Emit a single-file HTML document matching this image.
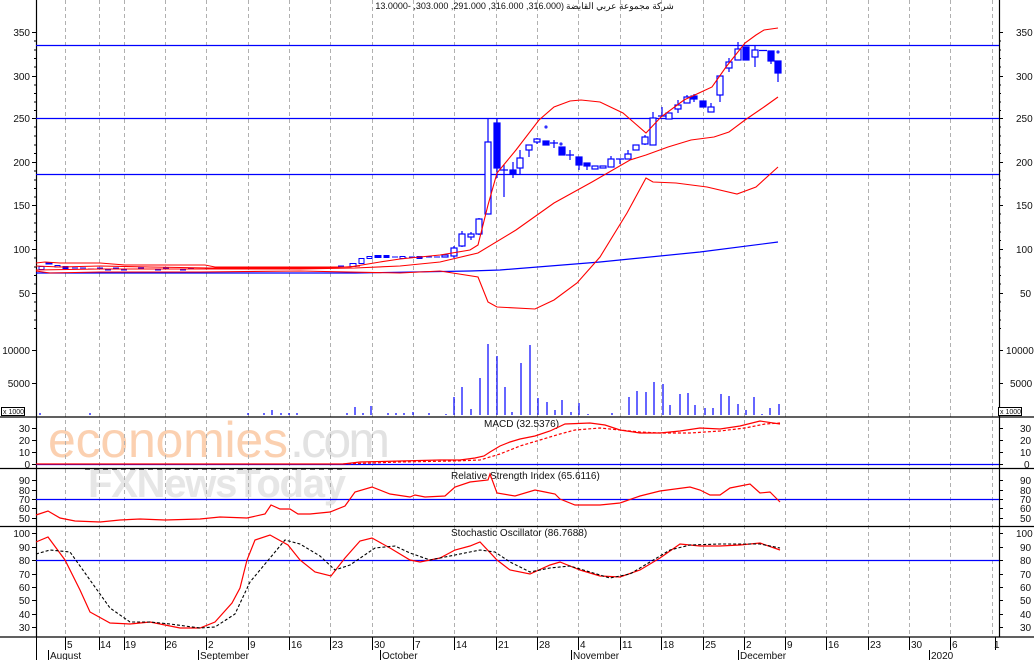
<!DOCTYPE html>
<html><head><meta charset="utf-8"><style>
html,body{margin:0;padding:0;background:#fff;}
svg{display:block;}
text{font-family:"Liberation Sans","Noto Sans CJK SC",sans-serif;font-size:10px;fill:#111;}
.l{text-anchor:end;}
</style></head><body>
<svg width="1034" height="660" viewBox="0 0 1034 660" xmlns="http://www.w3.org/2000/svg">
<rect width="1034" height="660" fill="#fff"/>
<!-- watermark -->
<text x="48" y="457" style="font-size:50px;fill:#fbd0b0;" textLength="240">economies</text>
<text x="290" y="457" style="font-size:50px;fill:#e2e2e2;" textLength="100">.com</text>
<text x="88" y="497" style="font-size:40px;fill:#e6e6e6;font-weight:bold" textLength="258">FXNewsToday</text>
<!-- gridlines -->
<g stroke="#b0b0b0" stroke-dasharray="4,3" stroke-width="1">
<path d="M65.5 0V637M99.5 0V637M124.5 0V637M165.5 0V637M206.5 0V637M248.5 0V637M289.5 0V637M330.5 0V637M372.5 0V637M413.5 0V637M454.5 0V637M496.5 0V637M537.5 0V637M578.5 0V637M620.5 0V637M661.5 0V637M703.5 0V637M744.5 0V637M785.5 0V637M826.5 0V637M868.5 0V637M909.5 0V637M950.5 0V637M992.5 0V637"/>
</g>
<!-- pane separators & axes -->
<g stroke="#000" stroke-width="1.2">
<path d="M0 417H1034M0 468.5H1034M0 526.5H1034M0 637H1034"/>
<path d="M36.5 0V637M999.5 0V637"/>
</g>
<g stroke="#000" stroke-width="1">
<path d="M36.5 637V660M48.5 650V660M198.5 650V660M380.5 650V660M571.5 650V660M738.5 650V660M929.5 650V660M995.5 637V650"/>
<path d="M65.5 637V650M99.5 637V650M124.5 637V650M165.5 637V650M206.5 637V650M248.5 637V650M289.5 637V650M330.5 637V650M372.5 637V650M413.5 637V650M454.5 637V650M496.5 637V650M537.5 637V650M578.5 637V650M620.5 637V650M661.5 637V650M703.5 637V650M744.5 637V650M785.5 637V650M826.5 637V650M868.5 637V650M909.5 637V650M950.5 637V650"/>
<path d="M32 32.5H36M34 41H36M34 50H36M34 58.5H36M34 67H36M32 76.5H36M34 85H36M34 93.5H36M34 102H36M34 110.5H36M32 118.5H36M34 127H36M34 136H36M34 145H36M34 153.5H36M32 162.5H36M34 171H36M34 180H36M34 188.5H36M34 197H36M32 205.5H36M34 214H36M34 223H36M34 232H36M34 240.5H36M32 249.5H36M34 258H36M34 267H36M34 275.5H36M34 284H36M32 293.5H36M34 302H36M34 311H36M34 320H36M34 328.5H36M32 350.5H36M32 383.5H36M32 428.5H36M32 440.5H36M32 452.5H36M32 464.5H36M32 480.5H36M32 490.5H36M32 499.5H36M32 508.5H36M32 518.5H36M32 533.5H36M32 547.5H36M32 560.5H36M32 574.5H36M32 587.5H36M32 600.5H36M32 614.5H36M32 627.5H36"/>
<path d="M999 32.5H1003M999 41H1001M999 50H1001M999 58.5H1001M999 67H1001M999 76.5H1003M999 85H1001M999 93.5H1001M999 102H1001M999 110.5H1001M999 118.5H1003M999 127H1001M999 136H1001M999 145H1001M999 153.5H1001M999 162.5H1003M999 171H1001M999 180H1001M999 188.5H1001M999 197H1001M999 205.5H1003M999 214H1001M999 223H1001M999 232H1001M999 240.5H1001M999 249.5H1003M999 258H1001M999 267H1001M999 275.5H1001M999 284H1001M999 293.5H1003M999 302H1001M999 311H1001M999 320H1001M999 328.5H1001M999 350.5H1003M999 383.5H1003M999 428.5H1003M999 440.5H1003M999 452.5H1003M999 464.5H1003M999 480.5H1003M999 490.5H1003M999 499.5H1003M999 508.5H1003M999 518.5H1003M999 533.5H1003M999 547.5H1003M999 560.5H1003M999 574.5H1003M999 587.5H1003M999 600.5H1003M999 614.5H1003M999 627.5H1003"/>
</g>
<!-- title -->
<text x="564" y="9" text-anchor="end" style="font-size:9px">13.0000- ,303.000 ,291.000 ,316.000 ,316.000)</text>
<text x="566" y="9" style="font-size:9px">شركة مجموعة عربي القابضة</text>
<!-- left labels -->
<g>
<text class="l" x="30" y="36">350</text><text class="l" x="30" y="80">300</text><text class="l" x="30" y="122">250</text><text class="l" x="30" y="166">200</text><text class="l" x="30" y="209">150</text><text class="l" x="30" y="253">100</text><text class="l" x="30" y="297">50</text>
<text class="l" x="30" y="354">10000</text><text class="l" x="30" y="387">5000</text>
<text class="l" x="30" y="432">30</text><text class="l" x="30" y="444">20</text><text class="l" x="30" y="456">10</text><text class="l" x="30" y="468">0</text>
<text class="l" x="30" y="484">90</text><text class="l" x="30" y="494">80</text><text class="l" x="30" y="503">70</text><text class="l" x="30" y="512">60</text><text class="l" x="30" y="522">50</text>
<text class="l" x="30" y="537">100</text><text class="l" x="30" y="551">90</text><text class="l" x="30" y="564">80</text><text class="l" x="30" y="578">70</text><text class="l" x="30" y="591">60</text><text class="l" x="30" y="604">50</text><text class="l" x="30" y="618">40</text><text class="l" x="30" y="631">30</text>
</g>
<g>
<text x="1016" y="36">350</text><text x="1016" y="80">300</text><text x="1016" y="122">250</text><text x="1016" y="166">200</text><text x="1016" y="209">150</text><text x="1016" y="253">100</text><text x="1020" y="297">50</text>
<text x="1006" y="354">10000</text><text x="1010" y="387">5000</text>
<text x="1020" y="432">30</text><text x="1020" y="444">20</text><text x="1020" y="456">10</text><text x="1024" y="468">0</text>
<text x="1020" y="484">90</text><text x="1020" y="494">80</text><text x="1020" y="503">70</text><text x="1020" y="512">60</text><text x="1020" y="522">50</text>
<text x="1016" y="537">100</text><text x="1020" y="551">90</text><text x="1020" y="564">80</text><text x="1020" y="578">70</text><text x="1020" y="591">60</text><text x="1020" y="604">50</text><text x="1020" y="618">40</text><text x="1020" y="631">30</text>
</g>
<rect x="1.5" y="407.5" width="23" height="8" fill="#fff" stroke="#000"/><text x="3" y="414" style="font-size:7px">x 1000</text>
<rect x="998.5" y="407.5" width="23" height="8" fill="#fff" stroke="#000"/><text x="1000" y="414" style="font-size:7px">x 1000</text>
<!-- date labels -->
<g>
<text x="67" y="648">5</text><text x="100" y="648">14</text><text x="125" y="648">19</text><text x="166" y="648">26</text><text x="208" y="648">2</text><text x="250" y="648">9</text><text x="291" y="648">16</text><text x="332" y="648">23</text><text x="374" y="648">30</text><text x="415" y="648">7</text><text x="456" y="648">14</text><text x="498" y="648">21</text><text x="539" y="648">28</text><text x="580" y="648">4</text><text x="622" y="648">11</text><text x="663" y="648">18</text><text x="705" y="648">25</text><text x="746" y="648">2</text><text x="787" y="648">9</text><text x="828" y="648">16</text><text x="870" y="648">23</text><text x="911" y="648">30</text><text x="952" y="648">6</text><text x="994" y="648">1</text>
<text x="50" y="659">August</text><text x="200" y="659">September</text><text x="382" y="659">October</text><text x="573" y="659">November</text><text x="740" y="659">December</text><text x="931" y="659">2020</text>
</g>
<g stroke="#0000ff" stroke-width="1.2">
<path d="M36 45.5H999M36 118.5H999M36 174.5H999"/>
<path d="M36 464.5H999M36 499.5H999M36 560.5H999"/>
</g>
<!-- flat region candles -->
<g stroke="#0000ff" stroke-width="1" fill="#fff">
<rect x="39" y="266.5" width="5" height="3"/><rect x="46" y="262.5" width="6" height="1.5" fill="#00f"/><rect x="55" y="265.5" width="5" height="1.5"/><rect x="63" y="266.5" width="5" height="2" fill="#00f"/>
<path d="M72 268H78M80 268H86M88 269H94M97 268H103M105 270H111M113 268H119M121 270H127M130 269H136M138 268H144M146 269H152M155 270H161M163 268H169M171 269H177M180 270H186M188 268H194M196 269H202M205 268H211M213 269H219M221 268H227M230 268H236M238 268H244M246 269H252M255 267H261M263 268H269M271 267H277M280 268H286M288 267H294M296 268H302M304 268H310M313 267H319M321 267H327M329 267H335M338 266H344"/>
<rect x="350" y="263.5" width="6" height="3"/><rect x="359" y="258.5" width="5" height="5"/><rect x="367" y="256.5" width="5" height="2"/><rect x="375" y="255.5" width="6" height="2" fill="#00f"/><rect x="384" y="255.5" width="5" height="2" fill="#00f"/>
<path d="M392 257H398M401 258H407M409 257H415M417 257H423M426 257H432M434 257H440"/>
<rect x="400" y="256.5" width="5" height="2"/><rect x="417" y="256.5" width="5" height="2" fill="#00f"/>
</g>
<!-- candles -->
<g stroke="#0000ff" stroke-width="1.2" fill="#fff">
<path d="M454 246V258M462 231V247M471 232V240M479 218V235M488 118V214M497 118V178M504 165V197M513 162V178M520 150V174M529 145V157M537 138V144M554 140V148M570 150V160M579 157V170M587 163V170M611 156V167M620 159V164M628 150V159M645 135V145M653 112V145M662 107V116M678 100V113M687 95V103M694 94V102M711 103V112M720 75V102M729 58V72M738 42V60M755 46V67M771 51V64M778 61V82"/>
<path d="M500 170H508M550 143H558M566 155H574M616 159H624M658 116H666M759 50.5H767"/>
<rect x="442" y="255" width="6" height="2"/>
<rect x="451" y="248" width="6" height="8"/>
<rect x="459" y="234" width="6" height="12"/>
<rect x="468" y="234" width="6" height="3"/>
<rect x="476" y="219" width="6" height="15"/>
<rect x="485" y="142" width="6" height="72"/>
<rect x="494" y="123" width="6" height="45" fill="#00f"/>
<rect x="510" y="170" width="6" height="4" fill="#00f"/>
<rect x="517" y="158" width="6" height="10"/>
<rect x="526" y="145" width="6" height="5"/>
<rect x="534" y="139" width="6" height="3"/>
<rect x="543" y="141" width="6" height="4" fill="#00f"/>
<rect x="559" y="147" width="6" height="8" fill="#00f"/>
<rect x="576" y="157" width="6" height="8" fill="#00f"/>
<rect x="584" y="163" width="6" height="3" fill="#00f"/>
<rect x="592" y="166" width="6" height="3"/>
<rect x="600" y="166" width="6" height="2"/>
<rect x="608" y="159" width="6" height="8"/>
<rect x="625" y="154" width="6" height="5"/>
<rect x="633" y="145" width="6" height="5"/>
<rect x="642" y="137" width="6" height="7"/>
<rect x="650" y="118" width="6" height="27"/>
<rect x="666" y="113" width="6" height="6"/>
<rect x="675" y="105" width="6" height="4"/>
<rect x="684" y="97" width="6" height="6"/>
<rect x="691" y="96" width="6" height="3" fill="#00f"/>
<rect x="700" y="101" width="6" height="6" fill="#00f"/>
<rect x="708" y="107" width="6" height="5"/>
<rect x="717" y="76" width="6" height="19"/>
<rect x="726" y="62" width="6" height="6"/>
<rect x="735" y="49" width="6" height="11"/>
<rect x="743" y="47" width="6" height="13" fill="#00f"/>
<rect x="752" y="50" width="6" height="7"/>
<rect x="768" y="51" width="6" height="10" fill="#00f"/>
<rect x="775" y="61" width="6" height="12" fill="#00f"/>
</g>
<g fill="#3030ff"><circle cx="546" cy="127" r="1.6"/><circle cx="561" cy="144" r="1.6"/><circle cx="778" cy="52" r="1.6"/></g>
<polyline fill="none" stroke="#0000ff" stroke-width="1.2" points="36,273 355,273 470,271 500,270 600,262 700,252 778,242"/>
<!-- bollinger -->
<g fill="none" stroke="#ff0000" stroke-width="1.1">
<polyline points="36,263 45,262 60,263 100,263 125,265 205,265 215,267 350,267 380,262 400,259 440,255 470,250 478,245 483,225 488,205 497,173 516,150 539,120 554,107 570,101 581,100 600,102 623,113 646,133 661,117 684,100 699,93 712,87 726,67 745,43 756,35 764,30 778,28"/>
<polyline points="36,270 100,269 200,269 300,269 355,268 400,266 440,262 478,253 516,230 554,203 592,182 630,160 646,155 668,147 691,140 714,137 729,132 745,120 764,107 778,97"/>
<polyline points="36,271 50,273 100,272 200,272 300,271 400,273 440,271 478,277 488,302 497,307 535,309 554,300 577,283 600,257 627,213 646,178 653,182 676,183 707,187 737,194 756,187 778,167"/>
<polyline points="36,266 60,267 100,266 150,267 210,268 260,268 330,268 360,266"/>
</g>
<!-- volume -->
<g stroke="#0000ff" stroke-width="1.2">
<path d="M40 415V413M90 415V413M248 415V413M264 415V413M272 415V410M281 415V413M289 415V413M297 415V413M347 415V413M355 415V407M363 415V413M371 415V406M388 415V413M396 415V413M404 415V413M413 415V412M429 415V413M446 415V414M454 415V397M462 415V387M471 415V409M480 415V378M488 415V344M497 415V356M505 415V387M512 415V412M521 415V363M530 415V345M538 415V398M547 415V402M555 415V410M562 415V400M571 415V412M579 415V403M588 415V414M612 415V413M629 415V397M637 415V391M646 415V392M654 415V382M663 415V384M670 415V405M680 415V394M688 415V393M695 415V405M705 415V408M713 415V408M721 415V394M729 415V396M738 415V404M746 415V410M754 415V397M762 415V414M770 415V408M779 415V404"/>
</g>
<!-- MACD -->
<text x="484" y="427">MACD (32.5376)</text>
<g fill="none" stroke-width="1.2">
<polyline stroke="#ff0000" points="36,464 343,464 360,462 400,461 440,460 460,460 475,458 484,456 490,452 500,446 510,442 520,439 535,436 550,431 565,424 590,423 605,425 620,430 640,433 660,433 680,431 700,428 720,429 740,426 760,421 780,424"/>
<polyline stroke="#ff0000" stroke-dasharray="3,2" points="343,464 400,462 454,461 480,460 500,454 520,446 540,440 560,434 575,430 600,428 620,430 640,432 660,433 690,433 720,431 745,428 765,424 780,423"/>
<path d="M85 469H343" stroke="#000" stroke-dasharray="5,4"/>
</g>
<!-- RSI -->
<text x="451" y="479">Relative Strength Index (65.6116)</text>
<polyline fill="none" stroke="#ff0000" stroke-width="1.2" points="36,515 48,511 60,518 75,521 100,522 120,520 140,519 165,520 200,519 220,517 247,518 265,514 271,505 280,509 290,509 298,514 310,514 330,512 345,506 355,492 372,487 390,494 410,497 415,495 425,497 445,496 455,487 470,482 488,480 490,474 497,493 515,496 535,490 545,492 555,494 560,499 575,505 600,505 620,503 640,496 660,491 690,487 700,490 710,495 720,495 730,488 750,484 760,493 770,492 780,502"/>
<!-- Stoch -->
<text x="451" y="536">Stochastic Oscillator (86.7688)</text>
<polyline fill="none" stroke="#ff0000" stroke-width="1.2" points="36,542 48,537 65,560 80,590 90,612 110,623 130,624 150,622 165,625 180,628 200,628 215,622 232,603 240,588 247,560 255,540 270,535 288,545 300,560 315,572 331,576 345,558 360,541 372,538 390,548 410,560 420,562 440,558 455,550 470,546 480,542 497,560 510,570 530,574 550,565 560,562 580,570 600,576 620,577 640,570 660,558 680,544 700,546 720,546 740,545 760,543 780,550"/>
<polyline fill="none" stroke="#000" stroke-width="1.1" stroke-dasharray="3,2" points="36,554 50,550 70,552 90,580 110,608 130,622 150,622 170,624 200,628 215,627 235,614 250,582 270,558 285,540 300,544 320,556 335,570 350,565 375,548 395,546 410,553 430,560 455,555 480,550 495,552 510,562 530,572 550,568 570,566 590,572 610,578 630,574 650,562 670,550 690,545 720,544 760,544 780,548"/>
</svg>
</body></html>
